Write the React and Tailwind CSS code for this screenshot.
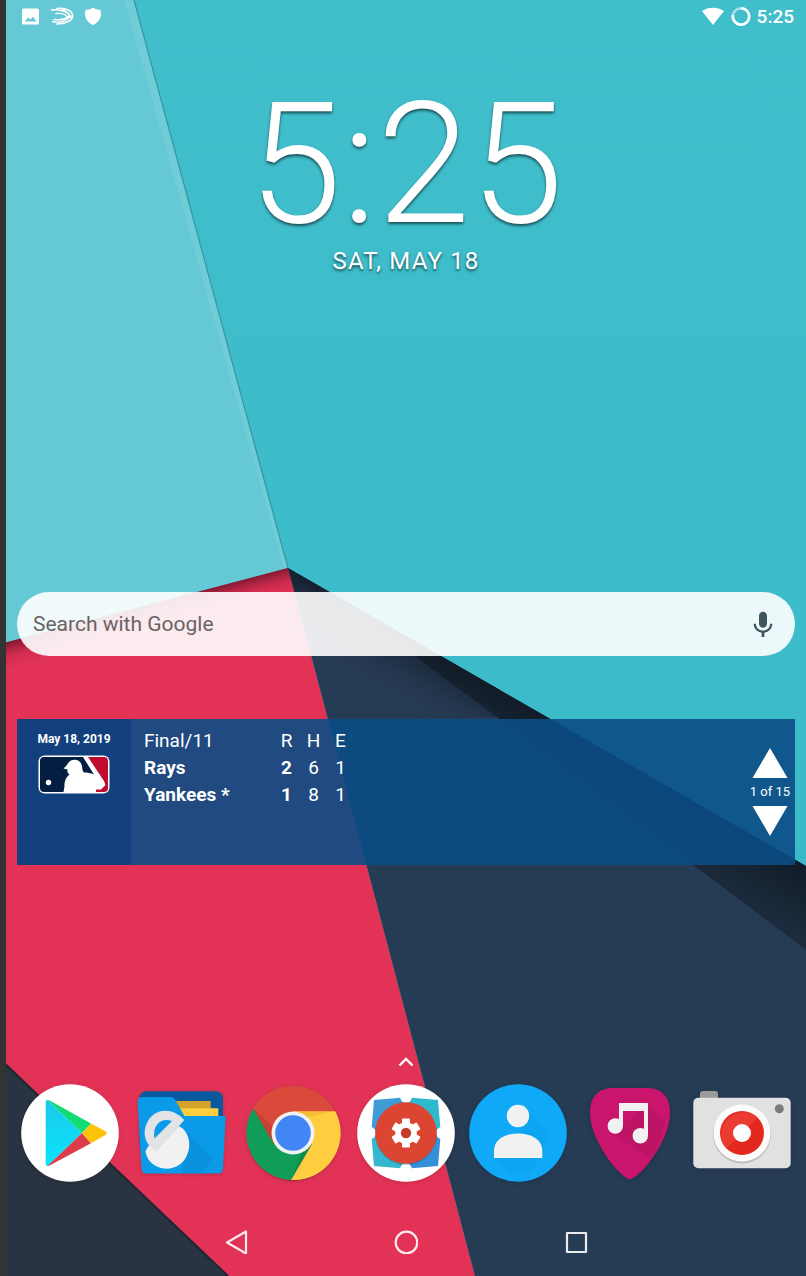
import React from "react";
import { MdMic } from "react-icons/md";

function Wallpaper() {
  return (
    <svg
      className="absolute inset-0 h-full w-full"
      viewBox="0 0 806 1276"
      preserveAspectRatio="none"
      aria-hidden="true"
    >
      <defs>
        <linearGradient id="sky" x1="0" y1="0" x2="0" y2="1">
          <stop offset="0" stopColor="#40becc" />
          <stop offset="1" stopColor="#38b8c7" />
        </linearGradient>
        <linearGradient id="redShade" gradientUnits="userSpaceOnUse" x1="147" y1="605" x2="155" y2="635">
          <stop offset="0" stopColor="#5c0f25" stopOpacity="0.75" />
          <stop offset="0.45" stopColor="#a01a3a" stopOpacity="0.3" />
          <stop offset="1" stopColor="#e23356" stopOpacity="0" />
        </linearGradient>
        <linearGradient id="navyShade" gradientUnits="userSpaceOnUse" x1="560" y1="725" x2="527" y2="782">
          <stop offset="0" stopColor="#121c28" />
          <stop offset="1" stopColor="#1c2c3e" />
        </linearGradient>
        <linearGradient id="navySoft" gradientUnits="userSpaceOnUse" x1="400" y1="632" x2="368" y2="688">
          <stop offset="0" stopColor="#131d2a" stopOpacity="0.9" />
          <stop offset="1" stopColor="#263b54" stopOpacity="0" />
        </linearGradient>
      </defs>
      <rect width="806" height="1276" fill="url(#sky)" />
      <path d="M0 0H134L288 568L0 645Z" fill="#64c9d5" />
      <path d="M124 0H134L288 568L284 569Z" fill="#7ed0d8" opacity="0.450" />
      <path d="M134 0L288 568" stroke="#3396a3" strokeWidth="1.200" />
      <path d="M288 568L475 1276H0V644Z" fill="#e23356" />
      <path d="M288 568L300 612L0 690V644Z" fill="url(#redShade)" />
      <path d="M288 568L806 866V1276H475Z" fill="#263b54" />
      <path d="M288 568L500 690L497 717L328 719Z" fill="url(#navySoft)" />
      <path d="M390 627L806 866V950L497 717L420 660Z" fill="url(#navyShade)" />
      <path d="M0 1059L228 1276H0Z" fill="#2a3341" />
      <path d="M0 1059L228 1276" stroke="#202631" strokeWidth="2" />
      <rect width="6" height="1276" fill="#333333" />
    </svg>
  );
}

function StatusBar() {
  return (
    <header className="flex h-8 items-center justify-between pt-0.5 pr-3 pl-4 text-white">
      <div className="flex items-center gap-2">
        <svg className="h-5 w-5" viewBox="0 0 20 20" role="img" aria-label="Screenshot saved">
          <path fill="currentColor" fillRule="evenodd" d="M1.500 1.500h14a1.500 1.500 0 0 1 1.500 1.500v13a1.500 1.500 0 0 1-1.500 1.500h-14A1.500 1.500 0 0 1 0 16v-13A1.500 1.500 0 0 1 1.500 1.500ZM2.500 14.500h12L11 9.500l-2.500 3-2-2Z" />
        </svg>
        <svg className="h-5 w-6" viewBox="0 0 24 20" role="img" aria-label="Keyboard" fill="none" stroke="currentColor" strokeLinecap="round">
          <path strokeWidth="1.700" d="M7 1.500C14 1 22.500 3 22.500 8.500C22.500 14 15 17 7 17" />
          <path strokeWidth="1.500" d="M1.500 3C9 2 19 4.500 20 10" />
          <path strokeWidth="1.300" d="M6 6.500C11 6 16 7.500 18.500 11" />
          <path strokeWidth="1.400" d="M2.500 14.500C9 16.500 17 13.500 20 9.500M4 12.500C9 13.500 15 12 18.500 9.500" />
          <path strokeWidth="1.300" d="M12 2.500C16 4 20 6.500 21 11" />
        </svg>
        <svg className="h-5 w-5" viewBox="0 0 20 20" role="img" aria-label="Protected">
          <path fill="currentColor" d="M11 .5C13 2 15.500 2.700 17.500 2.700C19 3 19 5 19 7C19 12 15.500 16 11 18C6.500 16 3 12 3 7C3 5 3 3 4.500 2.700C6.500 2.700 9 2 11 .5Z" />
        </svg>
      </div>
      <div className="flex items-center gap-1.5">
        <svg className="h-5 w-6" viewBox="0 0 24 20" role="img" aria-label="Wi-Fi">
          <path fill="currentColor" d="M1 4C7 -.5 17 -.5 23 4L12 18Z" />
        </svg>
        <svg className="h-5 w-5" viewBox="0 0 20 20" role="img" aria-label="Battery" fill="none" strokeWidth="2.600">
          <circle cx="10" cy="9.500" r="8.200" stroke="#a7e2e8" />
          <path stroke="currentColor" d="M10 1.300A8.200 8.200 0 1 1 2 8" />
        </svg>
        <span className="text-[19px] leading-6 font-medium">5:25</span>
      </div>
    </header>
  );
}

function Clock() {
  return (
    <time
      dateTime="2019-05-18T17:25"
      className="mt-[49px] flex flex-col items-center text-white"
    >
      <span className="text-[168px] leading-none font-light [text-shadow:0_2px_3px_rgba(0,0,0,0.6)]">
        5:25
      </span>
      <span className="text-2xl leading-6 tracking-wider [text-shadow:0_2px_3px_rgba(0,0,0,0.6)]">
        SAT, MAY 18
      </span>
    </time>
  );
}

function SearchBar() {
  return (
    <form role="search" className="mt-[319px] mr-[11px] ml-[11px] flex h-16 items-center rounded-full bg-white/90 px-4 pt-0.5">
      <input
        type="text"
        aria-label="Search with Google"
        placeholder="Search with Google"
        className="min-w-0 flex-1 bg-transparent text-[21px] text-[#5f5a5c] outline-none placeholder:text-[#6a6365]"
      />
      <button type="button" aria-label="Voice search" className="text-[#3f565c]">
        <MdMic className="h-8 w-8" />
      </button>
    </form>
  );
}

function LeagueLogo() {
  return (
    <svg className="h-10 w-[72px]" viewBox="0 0 72 40" role="img" aria-label="Major League Baseball">
      <rect x="0.500" y="0.500" width="71" height="38" rx="6" fill="#fff" />
      <path d="M6 2H45L56 19.500C53 18 49 17.500 46 17.500C44 16 44.500 12 43.500 9.500C42 4.500 36 3.500 32 6C29.500 8 29 11 25.500 13.500L29.500 14.500C29 17 30 18.500 31.500 19.500C28 22 26 27 26.500 31L25.500 37H6Q2 37 2 33V6Q2 2 6 2Z" fill="#041e42" />
      <path d="M50 2H66Q70 2 70 6V33Q70 37 66 37H58V34.500H63L67.500 30L66 26Z" fill="#bf0d2e" />
      <circle cx="10.500" cy="27.500" r="2.700" fill="#fff" />
    </svg>
  );
}

const GAME = [
  { team: "Rays", r: 2, h: 6, e: 1 },
  { team: "Yankees *", r: 1, h: 8, e: 1 },
];

function ScoreWidget() {
  return (
    <section className="mt-[63px] mr-[11px] ml-[11px] flex h-[146px] bg-[#0b4c85]/90 text-white">
      <div className="flex w-[114px] flex-col items-center bg-[#123f7d] pt-3">
        <span className="text-xs leading-4 font-bold">May 18, 2019</span>
        <div className="mt-2">
          <LeagueLogo />
        </div>
      </div>
      <div className="flex-1 pt-2 pl-[13px]">
        <table className="table-fixed text-center text-[19px] leading-[27px]">
          <thead>
            <tr>
              <th scope="col" className="w-[129px] text-left font-normal">Final/11</th>
              <th scope="col" className="w-[27px] font-normal">R</th>
              <th scope="col" className="w-[27px] font-normal">H</th>
              <th scope="col" className="w-[27px] font-normal">E</th>
            </tr>
          </thead>
          <tbody>
            {GAME.map((row) => (
              <tr key={row.team}>
                <th scope="row" className="text-left font-bold">{row.team}</th>
                <td className="font-bold">{row.r}</td>
                <td>{row.h}</td>
                <td>{row.e}</td>
              </tr>
            ))}
          </tbody>
        </table>
      </div>
      <div className="flex flex-col items-center justify-center gap-1 pr-[5px]">
        <button type="button" aria-label="Previous game">
          <svg className="block h-[30px] w-9" viewBox="0 0 36 30"><path fill="#fff" d="M18 0L35.500 30H.5Z" /></svg>
        </button>
        <span className="text-[13px] leading-5">1 of 15</span>
        <button type="button" aria-label="Next game">
          <svg className="block h-[30px] w-9" viewBox="0 0 36 30"><path fill="#fff" d="M.5 0H35.500L18 30Z" /></svg>
        </button>
      </div>
    </section>
  );
}

function PlayIcon() {
  return (
    <>
      <circle cx="49" cy="49" r="48.800" fill="#fff" />
      <linearGradient id="playBlue" x1="0" y1="0" x2="0" y2="1">
        <stop offset="0" stopColor="#1cc9ea" />
        <stop offset="1" stopColor="#08e5fb" />
      </linearGradient>
      <path d="M26.500 16L61 49L26.500 82Q24.700 82 24.700 80V18Q24.700 16 26.500 16Z" fill="url(#playBlue)" />
      <path d="M26.500 16Q28 16 30 17.200L70 39.500L61 49Z" fill="#10dc74" />
      <path d="M26.500 82Q28 82 30 80.800L70 59.300L61 49Z" fill="#dc3c4b" />
      <path d="M70 39.500L84 47Q87.500 49 84 51.300L70 59.300L61 49Z" fill="#fdc20a" />
    </>
  );
}

function FolderIcon() {
  return (
    <g transform="translate(-1 0)">
      <rect x="7.500" y="7.300" width="83.500" height="60" rx="7" fill="#0a599f" />
      <path d="M38 17H78.700V40H38Z" fill="#d2a32b" />
      <path d="M45 24.300H86.300V45H45Z" fill="#fdcf3e" />
      <path d="M10 13H39Q41.500 13 43 15.500L52.500 32H93.700L91 85Q90.500 89.500 86 89.500H14.500Q10 89.500 9.500 85L5.700 18Q5.700 13 10 13Z" fill="#0b9ae8" />
      <path d="M54 48L80 74L70 89.500H50Z" fill="#0780c8" opacity="0.350" />
      <path d="M13.500 67L17 61L24 66L47 42C57 47 60 61 55 71C50 84 35 88 24 82C18 79 14 73 13.500 67Z" fill="#f1f1f1" />
      <path fillRule="evenodd" d="M52.300 36L26 66Q23 69 20 64C11 57 11 45 16 37C24 23 42 24 52.300 36ZM22.500 54.500L40 37C30 33 20 40 22.500 54.500Z" fill="#e2e3e5" />
    </g>
  );
}

function ChromeIcon() {
  return (
    <g transform="translate(-1 0)">
      <circle cx="49" cy="50" r="47" fill="#000" opacity="0.200" />
      <circle cx="49" cy="49" r="47" fill="#d94a3a" />
      <path d="M9.300 24.500A47 47 0 0 0 47 96L68 60L30 60Z" fill="#0f9d58" />
      <path d="M49 27.300H91.300A47 47 0 0 1 47 96L68 60Z" fill="#ffcd40" />
      <path d="M49 27.300H91L64 33Z" fill="#e8a52a" opacity="0.400" />
      <path d="M9.300 24.500L30 60L31 44Z" fill="#b13328" opacity="0.400" />
      <path d="M47 96L68 60L60 64Z" fill="#0b7a43" opacity="0.500" />
      <circle cx="49" cy="49" r="21.500" fill="#f1f1f1" />
      <circle cx="49" cy="49" r="17.800" fill="#4285f4" />
    </g>
  );
}

function SettingsIcon() {
  return (
    <>
      <circle cx="49" cy="49" r="48.800" fill="#fff" />
      <path d="M17 16L43 13.700Q45 19 49 19V49H19Q19 45 14.700 43Z" fill="#3d9bd6" />
      <path d="M81 16L55 13.700Q53 19 49 19V49H79Q79 45 83.300 43Z" fill="#2fb9cd" />
      <path d="M17 82L43 84.300Q45 79 49 79V49H19Q19 53 14.700 55Z" fill="#35b8cf" />
      <path d="M81 82L55 84.300Q53 79 49 79V49H79Q79 53 83.300 55Z" fill="#3490d8" />
      <circle cx="49" cy="50" r="31" fill="#1a4a66" opacity="0.300" />
      <circle cx="49" cy="49" r="30.800" fill="#dc4531" />
      <g fill="#fff">
        <circle cx="49" cy="49" r="10.800" />
        <rect x="45" y="34.500" width="8" height="29" rx="1" />
        <rect x="45" y="34.500" width="8" height="29" rx="1" transform="rotate(60 49 49)" />
        <rect x="45" y="34.500" width="8" height="29" rx="1" transform="rotate(120 49 49)" />
      </g>
      <circle cx="49" cy="49" r="5.200" fill="#c63c2a" />
    </>
  );
}

function ContactsIcon() {
  return (
    <>
      <circle cx="49" cy="49" r="48.800" fill="#0fa9f7" />
      <path d="M57 25L80 48L73 74L60 88H41L27 74L50 50Z" fill="#0994df" opacity="0.220" />
      <circle cx="49" cy="32" r="11.200" fill="#f1f1f1" />
      <path d="M25 74V67C25 54 38 49.500 49 49.500C60 49.500 73.300 54 73.300 67V74Z" fill="#f1f1f1" />
    </>
  );
}

function MusicIcon() {
  return (
    <>
      <path d="M49 95.500C43 94 35 85 28 76C17 61 9 43 9 29C9 13 17 4 32 4H66C81 4 89 13 89 29C89 43 81 61 70 76C63 85 55 94 49 95.500Z" fill="#c9156b" />
      <path d="M67 20L84 37Q80 59 70 74L30 49L40 42Z" fill="#98124f" opacity="0.200" />
      <path d="M38 19H67V52H63V27H42V42H38Z" fill="#f1f1f1" />
      <circle cx="34.300" cy="42" r="7.700" fill="#f1f1f1" />
      <circle cx="59.300" cy="51.700" r="7.700" fill="#f1f1f1" />
    </>
  );
}

function CameraIcon() {
  return (
    <>
      <rect x="7" y="7" width="18" height="14" rx="3" fill="#9b9b9b" />
      <rect x="0.300" y="13.700" width="97.400" height="70.600" rx="5" fill="#e1e1e1" />
      <circle cx="86.300" cy="24.700" r="4.500" fill="#7b7b7b" />
      <circle cx="49" cy="50.500" r="29" fill="#000" opacity="0.150" />
      <circle cx="49" cy="49" r="28.500" fill="#fbfbfb" />
      <circle cx="49" cy="49" r="22" fill="#e4281f" />
      <path d="M33.500 64.500A22 22 0 0 1 64.500 33.500Z" fill="#f04a40" opacity="0.600" />
      <circle cx="49" cy="49" r="9" fill="#fff" />
    </>
  );
}

const APPS = [
  { name: "Play Store", Icon: PlayIcon },
  { name: "File Explorer", Icon: FolderIcon },
  { name: "Chrome", Icon: ChromeIcon },
  { name: "Launcher Settings", Icon: SettingsIcon },
  { name: "Contacts", Icon: ContactsIcon },
  { name: "Music", Icon: MusicIcon },
  { name: "Camera", Icon: CameraIcon },
];

function Dock() {
  return (
    <div className="mt-auto flex flex-col items-center">
      <button type="button" aria-label="All apps">
        <svg className="block h-4 w-4" viewBox="0 0 16 16" fill="none" stroke="#fff" strokeWidth="2.400">
          <path d="M1.500 11.500L8 5L14.500 11.500" />
        </svg>
      </button>
      <div className="mt-3.5 grid w-full grid-cols-7 px-2">
        {APPS.map(({ name, Icon }) => (
          <button key={name} type="button" aria-label={name} className="flex justify-center">
            <svg className="block h-[98px] w-[98px] drop-shadow-sm" viewBox="0 0 98 98">
              <Icon />
            </svg>
          </button>
        ))}
      </div>
    </div>
  );
}

function NavBar() {
  return (
    <nav className="mt-[26px] flex h-[68px] items-center justify-center gap-[146px]">
      <button type="button" aria-label="Back">
        <svg className="block h-6 w-6" viewBox="0 0 24 24" fill="none" stroke="#fff" strokeOpacity="0.900" strokeWidth="2.200" strokeLinejoin="round">
          <path d="M22 1.500V23.500L3 12.500Z" />
        </svg>
      </button>
      <button type="button" aria-label="Home">
        <svg className="block h-6 w-6" viewBox="0 0 24 24" fill="none" stroke="#fff" strokeOpacity="0.900" strokeWidth="2.200">
          <circle cx="12.500" cy="12.500" r="10.800" />
        </svg>
      </button>
      <button type="button" aria-label="Overview">
        <svg className="block h-6 w-6" viewBox="0 0 24 24" fill="none" stroke="#fff" strokeOpacity="0.900" strokeWidth="2.200" strokeLinejoin="round">
          <rect x="3" y="3" width="19" height="19" />
        </svg>
      </button>
    </nav>
  );
}

export default function App() {
  return (
    <main className="relative min-h-screen overflow-hidden font-[Roboto,sans-serif]">
      <Wallpaper />
      <div className="relative flex min-h-screen flex-col pl-1.5">
        <StatusBar />
        <Clock />
        <SearchBar />
        <ScoreWidget />
        <Dock />
        <NavBar />
      </div>
    </main>
  );
}
